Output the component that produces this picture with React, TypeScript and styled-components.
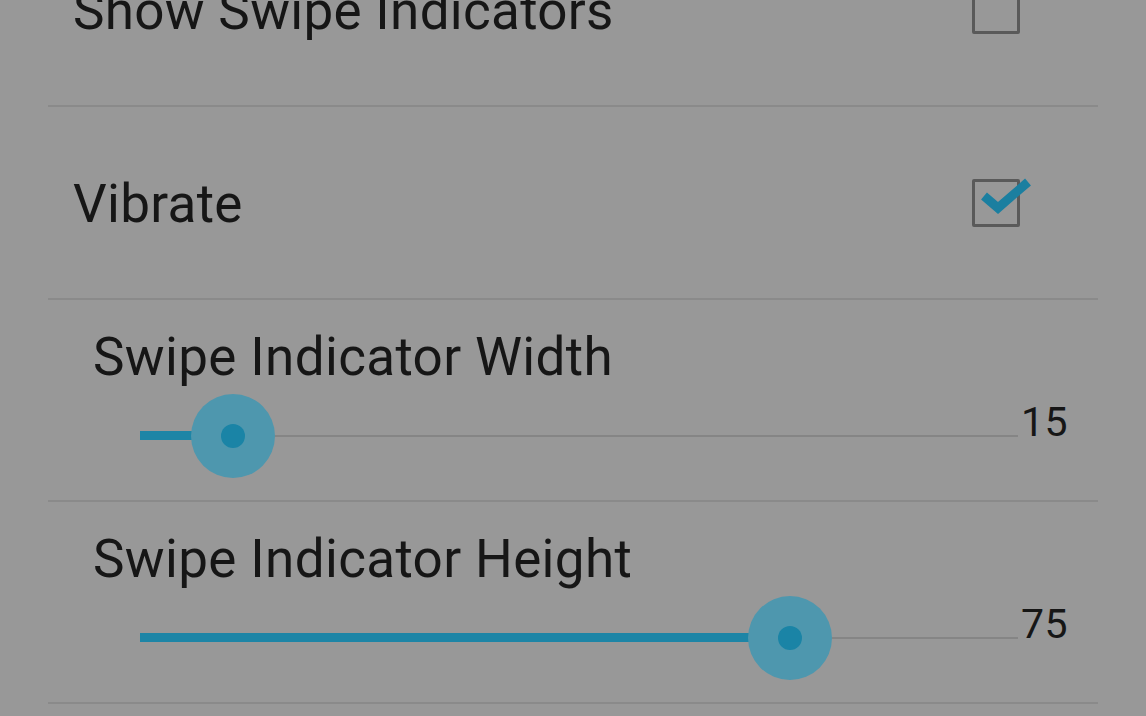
import React from "react";
import styled, { createGlobalStyle } from "styled-components";

const Global = createGlobalStyle`
  html, body { margin: 0; padding: 0; background: #989898; overflow: hidden; }
  body { font-family: Roboto, "Noto Sans", sans-serif; color: #161616; }
`;

const Page = styled.div`
  width: 1146px;
  height: 716px;
  overflow: hidden;
  background: #989898;
`;

const List = styled.div`
  margin-top: -86px;
  margin-left: 48px;
  width: 1050px;
  display: flex;
  flex-direction: column;
`;

const Divider = styled.div`
  height: 2px;
  background: #8a8a8a;
`;

const CheckRow = styled.div`
  height: 191px;
  display: flex;
  align-items: center;
  justify-content: space-between;
  padding: 0 78px 0 25px;
`;

const Title = styled.div`
  font-size: 53px;
  line-height: 1;
  letter-spacing: 0.3px;
  padding-top: 4px;
`;

const Box = styled.div`
  position: relative;
  width: 48px;
  height: 48px;
  box-sizing: border-box;
  border: 3px solid #5a5a5a;
  border-radius: 2px;
`;

const Mark = styled.svg`
  position: absolute;
  left: 2px;
  top: -8px;
  overflow: visible;
`;

const SliderRow = styled.div`
  height: 200px;
  box-sizing: border-box;
  padding: 31px 0 0 45px;
  display: flex;
  flex-direction: column;
`;

const SliderLabel = styled.div`
  font-size: 53px;
  line-height: 1;
  letter-spacing: 0.35px;
`;

const TrackLine = styled.div`
  display: flex;
  align-items: flex-start;
  margin-top: 18px;
  padding-left: 47px;
`;

const Track = styled.div`
  position: relative;
  width: 878px;
  height: 2px;
  margin-top: 33px;
  background: #858585;
`;

const Fill = styled.div`
  position: absolute;
  left: 0;
  top: -4px;
  height: 9px;
  background: #1d85a6;
`;

const Halo = styled.div`
  position: absolute;
  top: 1px;
  width: 84px;
  height: 84px;
  margin: -42px 0 0 -42px;
  border-radius: 50%;
  background: #4e97ae;
`;

const Knob = styled.div`
  position: absolute;
  top: 1px;
  width: 24px;
  height: 24px;
  margin: -12px 0 0 -12px;
  border-radius: 50%;
  background: #1a84a6;
`;

const Value = styled.div`
  font-size: 41px;
  line-height: 40px;
  margin-left: 3px;
  letter-spacing: 0.5px;
`;

const Check = ({ checked }: { checked: boolean }) => (
  <Box>
    {checked && (
      <Mark width="56" height="56" viewBox="0 0 56 56">
        <path
          d="M7 22 L21 34 L51 8"
          fill="none"
          stroke="#1b7fa0"
          strokeWidth="9"
          strokeLinecap="butt"
          strokeLinejoin="miter"
        />
      </Mark>
    )}
  </Box>
);

const MIN = 5;
const MAX = 99.6;

const Slider = ({ label, value }: { label: string; value: number }) => {
  const pct = ((value - MIN) / (MAX - MIN)) * 100;
  return (
    <SliderRow>
      <SliderLabel>{label}</SliderLabel>
      <TrackLine>
        <Track>
          <Fill style={{ width: `${pct}%` }} />
          <Halo style={{ left: `${pct}%` }} />
          <Knob style={{ left: `${pct}%` }} />
        </Track>
        <Value>{value}</Value>
      </TrackLine>
    </SliderRow>
  );
};

export default function App() {
  return (
    <Page>
      <Global />
      <List>
        <CheckRow>
          <Title>Show Swipe Indicators</Title>
          <Check checked={false} />
        </CheckRow>
        <Divider />
        <CheckRow>
          <Title>Vibrate</Title>
          <Check checked={true} />
        </CheckRow>
        <Divider />
        <Slider label="Swipe Indicator Width" value={15} />
        <Divider />
        <Slider label="Swipe Indicator Height" value={75} />
        <Divider />
      </List>
    </Page>
  );
}
